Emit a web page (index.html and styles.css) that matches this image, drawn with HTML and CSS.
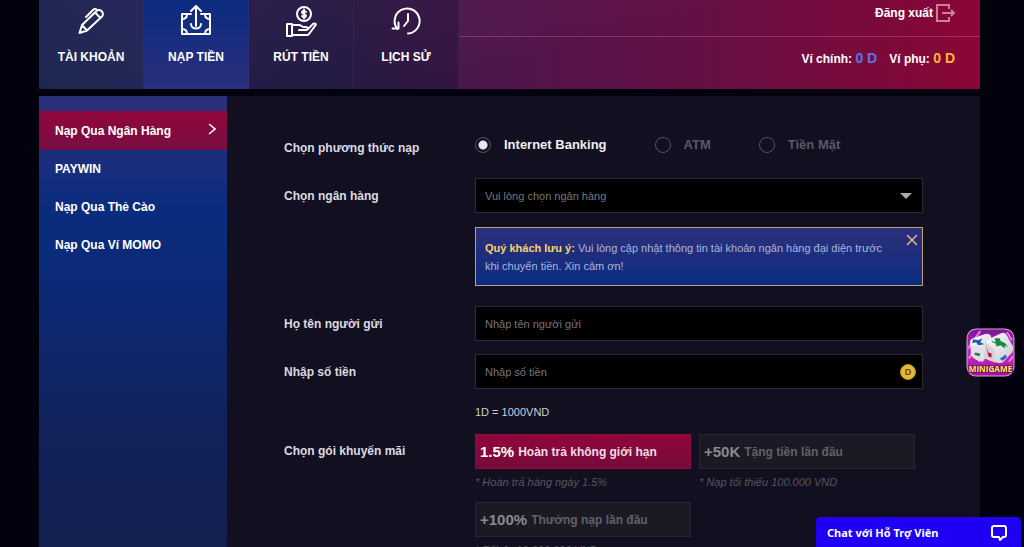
FILE: index.html
```html
<!DOCTYPE html>
<html lang="vi">
<head>
<meta charset="utf-8">
<title>Nạp tiền</title>
<link rel="stylesheet" href="styles.css">
</head>
<body>
<div class="shell">
  <header class="topbar">
    <nav class="tabs">
      <a class="tab tab-account" href="#account">
        <svg class="tab-icon" viewBox="0 0 32 32"><path d="M4.500 28L7 20 21 6.500a3.800 3.800 0 0 1 6 5L12 25.500zM7 20l5 5.500M20 7.500l5.500 5.500M11 12l7-7q2-2 4 0"/></svg>
        <span>TÀI KHOẢN</span>
      </a>
      <a class="tab tab-deposit" href="#deposit" aria-current="page">
        <svg class="tab-icon" viewBox="0 0 32 32"><path d="M11 9H2v20h28V9h-9M16 21V1M11 6l5-5 5 5M11 19c0 6 10 6 10 0M2 14c3 0 5-2 5-5M30 14c-3 0-5-2-5-5M2 24c3 0 5 2 5 5M30 24c-3 0-5 2-5 5"/></svg>
        <span>NẠP TIỀN</span>
      </a>
      <a class="tab" href="#withdraw">
        <svg class="tab-icon" viewBox="0 0 32 32"><circle cx="19" cy="9" r="7"/><path d="M21 7c-1-1.500-4-1.500-4 .2 0 2.300 4 1.300 4 3.600 0 1.700-3 1.700-4 .2M19 4.500v9M2 19h5v12H2zM7 20h7c2 0 3 2 5 2h2c2 0 2 3 0 3h-7M23 24l5-5c2-1 4 0 2 2l-6 8q-1 1-2 1H7"/></svg>
        <span>RÚT TIỀN</span>
      </a>
      <a class="tab" href="#history">
        <svg class="tab-icon" viewBox="0 0 32 32"><path d="M7.500 24A12.500 12.500 0 1 1 18 28.500M2.500 23.500h6v-6M18 9v7l-4 5"/></svg>
        <span>LỊCH SỬ</span>
      </a>
    </nav>
    <div class="user">
      <div class="user-top">
        <button class="logout" type="button">Đăng xuất
          <svg class="logout-icon" viewBox="0 0 20 18"><path d="M13 5V1H1v16h12v-4M6 9h12M15 6l3 3-3 3"/></svg>
        </button>
      </div>
      <div class="wallets">
        <span>Ví chính: <b class="coin-main">0 D</b></span>
        <span>Ví phụ: <b class="coin-sub">0 D</b></span>
      </div>
    </div>
  </header>

  <div class="body">
    <nav class="side">
      <a class="side-link side-active" href="#bank">Nạp Qua Ngân Hàng
        <svg class="chevron" viewBox="0 0 8 12"><path d="M1 1l6 5-6 5"/></svg>
      </a>
      <a class="side-link" href="#paywin">PAYWIN</a>
      <a class="side-link" href="#card">Nạp Qua Thẻ Cào</a>
      <a class="side-link" href="#momo">Nạp Qua Ví MOMO</a>
    </nav>

    <form class="form">
      <div class="row row-methods" role="radiogroup" aria-labelledby="method-label">
        <span class="label" id="method-label">Chọn phương thức nạp</span>
        <div class="methods">
          <label class="method"><input type="radio" name="method" checked>Internet Banking</label>
          <label class="method"><input type="radio" name="method">ATM</label>
          <label class="method"><input type="radio" name="method">Tiền Mặt</label>
        </div>
      </div>
      <div class="row row-bank">
        <label class="label" for="bank">Chọn ngân hàng</label>
        <div class="select-wrap">
          <select class="field" id="bank"><option>Vui lòng chọn ngân hàng</option></select>
        </div>
      </div>
      <div class="row row-notice">
        <div class="notice">
          <p class="notice-text"><b>Quý khách lưu ý:</b> Vui lòng cập nhật thông tin tài khoản ngân hàng đại diện trước khi chuyển tiền. Xin cảm ơn!</p>
          <button class="close" type="button" aria-label="Đóng"><svg viewBox="0 0 12 12"><path d="M1 1l10 10M11 1L1 11"/></svg></button>
        </div>
      </div>
      <div class="row row-name">
        <label class="label" for="sender">Họ tên người gửi</label>
        <input class="field" id="sender" type="text" placeholder="Nhập tên người gửi">
      </div>
      <div class="row row-amount">
        <label class="label" for="amount">Nhập số tiền</label>
        <div class="amount-wrap">
          <input class="field" id="amount" type="text" placeholder="Nhập số tiền">
          <span class="coin">D</span>
        </div>
      </div>
      <p class="row rate"><span>1D = 1000VND</span></p>
      <div class="row row-promo">
        <span class="label">Chọn gói khuyến mãi</span>
        <div class="promos">
          <div class="promo">
            <button class="promo-button promo-active" type="button"><b>1.5%</b>Hoàn trả không giới hạn</button>
            <em>* Hoàn trả hàng ngày 1.5%</em>
          </div>
          <div class="promo">
            <button class="promo-button" type="button"><b>+50K</b>Tặng tiền lần đầu</button>
            <em>* Nạp tối thiểu 100.000 VND</em>
          </div>
          <div class="promo">
            <button class="promo-button" type="button"><b>+100%</b>Thưởng nạp lần đầu</button>
            <em>* Tối đa 10.000.000 VND</em>
          </div>
        </div>
      </div>
    </form>
  </div>
</div>

<button class="minigame" type="button" aria-label="Minigame">
  <svg viewBox="0 0 48 48">
    <defs>
      <linearGradient id="mg" x1="0" y1="0" x2="0" y2="1"><stop offset="0" stop-color="#7a1495"/><stop offset=".5" stop-color="#c32bc0"/><stop offset="1" stop-color="#a3139c"/></linearGradient>
      <linearGradient id="face" x1="0" y1="0" x2="1" y2="1"><stop offset="0" stop-color="#fff"/><stop offset="1" stop-color="#c9c6d6"/></linearGradient>
    </defs>
    <rect x="1" y="1" width="46" height="46" rx="9" fill="url(#mg)" stroke="#d9a6d8"/>
    <path d="M2 20L14 3M3 30l4-7M40 4l5 8M42 33l4-5" stroke="#ed79e0" stroke-width="2"/>
    <path d="M4 14q0-3 3-4l11-4q3-1 6 1l3 8-5 14-9 4-8-6z" fill="url(#face)"/>
    <path d="M5 17l14 4-2 12q-10-1-12-7z" fill="#e2dfea"/>
    <path d="M20 14q1-3 4-4l11-5q3-1 5 2l6 11q1 3-1 6l-8 9q-3 2-6 1l-9-3q-3-1-3-4z" fill="url(#face)"/>
    <path d="M19 14l9 7 1 13-8-3q-3-1-3-4z" fill="#d7ced8"/>
    <path d="M7 11l5 1 4-2-2 4 4 2-6 1-2-3-4 1z" fill="#1c5aa8"/>
    <path d="M25 11q1 3 4 3l-1-4 5 0 1 3q5 1 7 6l-3-2 0 3-4-3-4 1-1-3q-4 0-4-4z" fill="#168a3f"/>
    <path d="M20 18l2 6 3 1v4l-3-1z" fill="#b11b30"/>
    <path d="M9 24l5 1-1 3-5-2z" fill="#237b40"/>
    <path d="M33 30l6-4 1 3-4 3z" fill="#2a66c4"/>
    <text class="minigame-text" x="24" y="43" text-anchor="middle">MINIGAME</text>
  </svg>
</button>

<button class="chat" type="button">Chat với Hỗ Trợ Viên
  <svg class="chat-icon" viewBox="0 0 18 18"><path d="M4 2h10q2 0 2 2v7q0 2-2 2h-1l-3 3-1-3H4q-2 0-2-2V4q0-2 2-2z"/></svg>
</button>
</body>
</html>
```
FILE: styles.css
```css
* { box-sizing: border-box; }

body {
  margin: 0;
  height: 100vh;
  overflow: hidden;
  background: #01020d;
  color: #cfcdd6;
  font: 11px/18px "Liberation Sans", Arial, sans-serif;
}

button { padding: 0; border: 0; background: none; color: inherit; font: inherit; cursor: pointer; }
a { color: inherit; text-decoration: none; }
p { margin: 0; }
svg { display: block; fill: none; }

.shell { min-height: 100vh; display: flex; flex-direction: column; gap: 7px; padding: 0 44px 0 39px; }

.topbar {
  display: flex;
  height: 89px;
  background: linear-gradient(165deg, rgba(160, 65, 120, .25), transparent 55%), linear-gradient(90deg, #1e2b58, #25204e 30%, #4b174c 46%, #6a0e42 75%, #8a0636);
  font-size: 12px;
}
.tabs { display: flex; }
.tab {
  width: 105px;
  display: flex;
  flex-direction: column;
  align-items: center;
  gap: 11px;
  padding-top: 5px;
  background: rgba(20, 18, 50, .35);
  border-right: 1px solid rgba(90, 60, 120, .2);
  color: #fff;
  font-weight: bold;
}
.tab-account { background: linear-gradient(45deg, #1d2850, #27285a); }
.tab-deposit { background: linear-gradient(#0b2b80, #2c2f7c); }
.tab-icon { width: 32px; height: 32px; stroke: #fff; stroke-width: 2; stroke-linejoin: round; stroke-linecap: round; }

.user { flex: 1; display: flex; flex-direction: column; color: #fff; font-weight: bold; }
.user-top { height: 37px; display: flex; justify-content: flex-end; align-items: flex-start; padding: 4px 24px 0; border-bottom: 1px solid rgba(220, 120, 165, .35); }
.logout { display: flex; align-items: center; gap: 3px; font-weight: bold; }
.logout-icon { width: 20px; height: 18px; stroke: #cf7d9f; stroke-width: 2; }
.wallets { display: flex; justify-content: flex-end; gap: 12px; padding: 12px 25px 0; }
.wallets b { font-size: 14px; }
.coin-main { color: #5577e8; }
.coin-sub { color: #fdb735; }

.body { flex: 1; display: flex; background: #110f20; }
.side { width: 188px; flex: none; padding-top: 15px; background: linear-gradient(#2d307b 0, #2a307a 15px, #0b2c7e 110px, #0b2a78 180px, #12235c 330px, #141f4d); }
.side-link { display: flex; align-items: center; justify-content: space-between; height: 38px; padding: 0 11px 0 16px; color: #fff; font-size: 12px; font-weight: bold; }
.side-active { height: 39px; background: linear-gradient(#92063c, #770e43); }
.chevron { width: 8px; height: 12px; margin-bottom: 3px; stroke: #fff; stroke-width: 1.500; }

.form { flex: 1; padding: 31px 57px 0; }
.row { display: grid; grid-template-columns: 191px 1fr; align-items: center; }
.label { font-size: 12px; font-weight: bold; color: #dddbe2; }
.row-methods { height: 36px; margin-bottom: 15px; padding-top: 5px; }
.methods { display: flex; gap: 48px; margin-top: -6px; }
.method { display: flex; align-items: center; gap: 13px; color: #5b5960; font-size: 13px; font-weight: bold; }
.method:has(input:checked) { color: #f0eff4; }
.method input { appearance: none; width: 16px; height: 16px; margin: 0; border: 1px solid #55535e; border-radius: 50%; }
.method input:checked { background: radial-gradient(#e8e6ec 4px, transparent 5px); }

.field { display: block; width: 100%; height: 35px; padding: 0 9px; border: 1px solid #2c2b33; border-radius: 0; outline: 0; background: #000; color: #77767b; font: 11px/18px "Liberation Sans", Arial, sans-serif; }
.field::placeholder { color: #77767b; opacity: 1; }
select.field { appearance: none; }
.select-wrap, .amount-wrap { display: grid; align-items: center; }
.select-wrap > *, .amount-wrap > * { grid-area: 1 / 1; }
.select-wrap::after { content: ""; grid-area: 1 / 1; justify-self: end; margin-right: 11px; border: 6px solid transparent; border-top-color: #aaa9ad; border-bottom: 0; pointer-events: none; }
.row-bank { margin-bottom: 14px; }

.row-notice { margin-bottom: 20px; }
.notice { grid-column: 2; display: grid; height: 59px; padding: 11px 4px 0 9px; border: 1px solid #c0a07c; background: linear-gradient(#2d307b, #0b2c80); background-clip: padding-box; color: #aeb6de; }
.notice-text, .close { grid-area: 1 / 1; }
.notice-text { padding-right: 24px; }
.notice b { color: #ffd16f; }
.close { justify-self: end; align-self: start; margin-top: -5px; }
.close svg { width: 12px; height: 12px; stroke: #e2b486; stroke-width: 1.500; }

.row-name { margin-bottom: 13px; }
.coin { justify-self: end; width: 16px; height: 16px; margin-right: 7px; border: 1px solid #c08e17; border-radius: 50%; background: #e2b933; color: #70430c; font-size: 9px; font-weight: bold; line-height: 14px; text-align: center; }
.rate { margin: 14px 0 13px; }
.rate span { grid-column: 2; }

.row-promo { align-items: start; }
.row-promo .label { line-height: 35px; }
.promos { display: flex; flex-wrap: wrap; gap: 11px 8px; }
.promo { width: 216px; }
.promo-button { display: flex; align-items: center; gap: 4px; width: 100%; height: 35px; padding: 0 4px; border: 1px solid #27252e; background: #1b1924; color: #626067; font-size: 12px; font-weight: bold; }
.promo-button b { color: #8c8a90; font-size: 15px; }
.promo-active { border-color: #8c0b3d; background: linear-gradient(#92063c, #750b3a); color: #f3dce6; }
.promo-active b { color: #fff; }
.promo em { display: block; margin-top: 4px; color: #58565e; }

.minigame { position: fixed; right: 9px; top: 328px; width: 49px; height: 49px; }
.minigame-text { fill: #fff04a; stroke: #7b1372; stroke-width: 2px; paint-order: stroke; font: bold 8px "Open Sans", sans-serif; }
.chat { position: fixed; right: 3px; bottom: 0; display: flex; align-items: center; justify-content: space-between; width: 205px; height: 30px; padding: 2px 13px 0 11px; border-radius: 4px 4px 0 0; background: #2000f2; color: #fff; font: bold 11px/18px "Noto Sans", sans-serif; }
.chat-icon { width: 18px; height: 18px; stroke: #fff; stroke-width: 2; stroke-linejoin: round; }
```
